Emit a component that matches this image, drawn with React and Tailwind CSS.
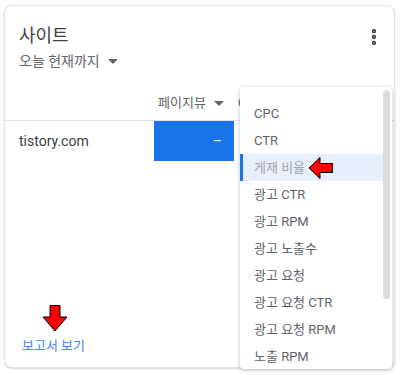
import { MoreVertical } from 'lucide-react';

const menuItems = [
  'CPC',
  'CTR',
  '게재 비율',
  '광고 CTR',
  '광고 RPM',
  '광고 노출수',
  '광고 요청',
  '광고 요청 CTR',
  '광고 요청 RPM',
  '노출 RPM',
];

function Caret() {
  return (
    <svg width="10" height="5" viewBox="0 0 10 5" className="inline-block">
      <path d="M0 0h10L5 5z" fill="#5f6368" />
    </svg>
  );
}

function LeftArrow() {
  return (
    <svg width="26" height="24" viewBox="0 0 26 24">
      <path d="M1 12 L12 1.5 V7.5 H24.5 V16.5 H12 V22.5 Z" fill="#ff0000" stroke="#000" strokeWidth="1" />
    </svg>
  );
}

function DownArrow() {
  return (
    <svg width="26" height="27" viewBox="0 0 26 27">
      <path d="M8 0.5 H18 V12 H25 L13 26 L1 12 H8 Z" fill="#ff0000" stroke="#000" strokeWidth="1" />
    </svg>
  );
}

export default function App() {
  return (
    <div
      className="w-[400px] h-[375px] bg-white pt-[5px] pl-[4px]"
      style={{ fontFamily: "Roboto, 'Noto Sans CJK KR', sans-serif" }}
    >
      <div className="relative w-[391px] h-[363px] rounded-lg border border-[#e3e3e3] shadow-[0_1px_2px_rgba(0,0,0,0.15)] bg-white flex flex-col">
        <div className="flex justify-between items-start pl-[14px] pr-[10px] pt-[18px]">
          <h2 className="text-[18px] leading-6 text-[#3c4043]">사이트</h2>
          <MoreVertical size={20} strokeWidth={3.2} className="text-[#3c4043] mt-[3px]" />
        </div>
        <div className="pl-[14px] mt-[3px] flex items-center gap-[8px] text-[14px] leading-5 text-[#5f6368]">
          오늘 현재까지
          <Caret />
        </div>

        <div className="mt-[15px] grid grid-cols-[149px_80px_1fr] border-b border-[#e0e0e0] h-[35px] items-center text-[13px] text-[#5f6368]">
          <div />
          <div className="flex items-center gap-[8px] pl-[4px]">
            페이지뷰
            <Caret />
          </div>
          <div className="pl-[4px]">CPC</div>
        </div>
        <div className="grid grid-cols-[149px_80px_1fr] h-[40px] items-center text-[14px] text-[#3c4043]">
          <div className="pl-[14px]">tistory.com</div>
          <div className="h-full bg-[#1a73e8] text-white flex items-center justify-end pr-[12px]">–</div>
          <div />
        </div>

        <div className="mt-auto pl-[17px] pb-[12px] text-[13px] text-[#4285f4]">보고서 보기</div>

        <div className="absolute left-[37px] top-[299px]">
          <DownArrow />
        </div>

        <div className="absolute left-[235px] top-[81px] w-[152px] h-[282px] rounded bg-white shadow-[0_1px_4px_rgba(0,0,0,0.25)] overflow-hidden flex">
          <div className="flex-1 pt-[13px]">
            {menuItems.map(item => (
              <div
                key={item}
                className={
                  item === '게재 비율'
                    ? 'relative h-[27px] flex items-center pl-[11px] text-[13px] text-[#a0a4a8] bg-[#e8f0fe] border-l-[3px] border-[#1a73e8]'
                    : 'h-[27px] flex items-center pl-[11px] text-[13px] text-[#5f6368] ml-[3px]'
                }
              >
                {item}
                {item === '게재 비율' && (
                  <div className="absolute left-[65px] top-[2px]">
                    <LeftArrow />
                  </div>
                )}
              </div>
            ))}
          </div>
          <div className="w-[7px] mr-[2px] mt-[3px] h-[209px] rounded-full bg-[#dadce0]" />
        </div>
      </div>
    </div>
  );
}
